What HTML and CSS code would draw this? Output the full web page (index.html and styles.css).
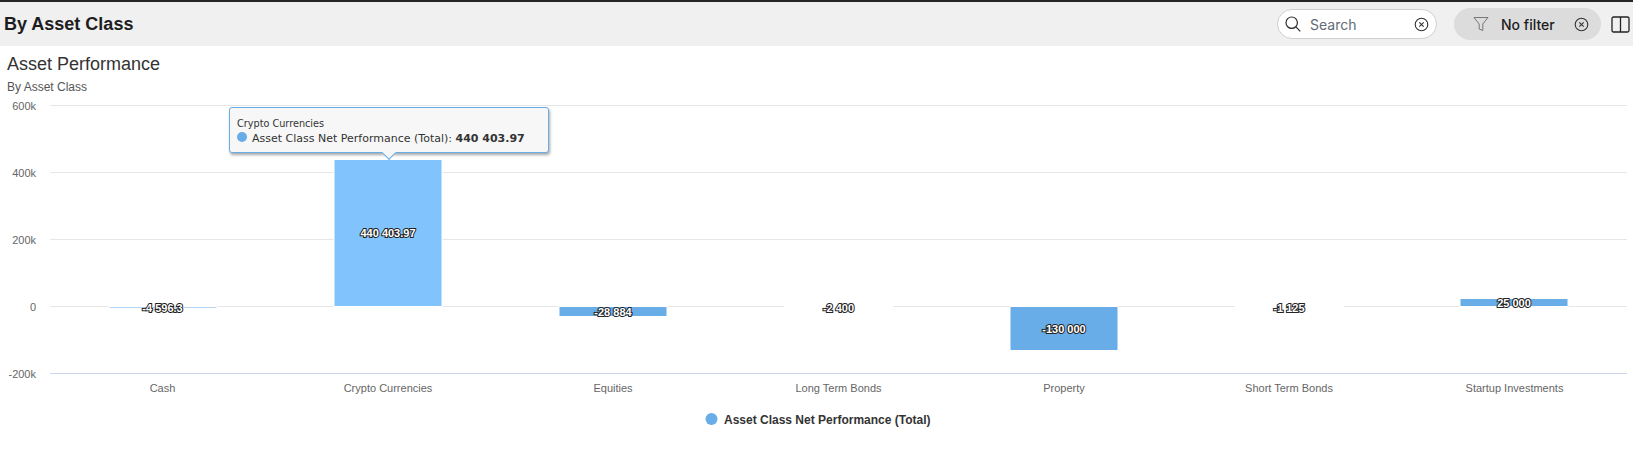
FILE: index.html
```html
<!DOCTYPE html>
<html lang="en">
<head>
<meta charset="utf-8">
<title>By Asset Class</title>
<link rel="stylesheet" href="styles.css">
</head>
<body>
<header class="topbar">
  <h1 class="page-title">By Asset Class</h1>
  <div class="tools">
    <div class="search">
      <svg class="ico-search" width="18" height="18" viewBox="0 0 18 18"><circle cx="7.7" cy="7.7" r="5.7"/><path d="M11.9 11.9 16.3 16.3"/></svg>
      <span class="search-text">Search</span>
      <svg class="ico-clear" width="15" height="15" viewBox="0 0 15 15"><circle cx="7.5" cy="7.5" r="6.3"/><path d="M5.3 5.3 9.7 9.7M9.7 5.3 5.3 9.7"/></svg>
    </div>
    <div class="filter">
      <svg class="ico-funnel" width="16" height="16" viewBox="0 0 16 16"><path d="M1 1.5H15L9.8 8V14.5L6.2 13V8Z"/></svg>
      <span class="filter-text">No filter</span>
      <svg class="ico-clear" width="15" height="15" viewBox="0 0 15 15"><circle cx="7.5" cy="7.5" r="6.3"/><path d="M5.3 5.3 9.7 9.7M9.7 5.3 5.3 9.7"/></svg>
    </div>
    <svg class="ico-panel" width="19" height="17" viewBox="0 0 19 17"><rect x="1" y="1" width="17" height="15" rx="1.5"/><path d="M9.5 1V16"/></svg>
  </div>
</header>
<main class="panel">
  <h2 class="chart-title">Asset Performance</h2>
  <p class="chart-sub">By Asset Class</p>
  <div class="chart">
    <svg class="plot" width="1633" height="359" viewBox="0 98 1633 359">
      <g class="grid">
        <path d="M50 105.5H1627"/>
        <path d="M50 172.5H1627"/>
        <path d="M50 239.5H1627"/>
        <path d="M50 306.5H1627"/>
      </g>
      <path class="axis" d="M50 373.5H1627"/>
      <g class="ylabels">
        <text x="36" y="110">600k</text>
        <text x="36" y="177">400k</text>
        <text x="36" y="244">200k</text>
        <text x="36" y="311">0</text>
        <text x="36" y="378">-200k</text>
      </g>
      <g class="bars">
        <rect x="109" y="306.5" width="108" height="1.5"/>
        <rect class="bar-hover" x="334" y="159.5" width="108" height="147"/>
        <rect x="559" y="306.5" width="108" height="10"/>
        <rect class="bar-flat" x="784.5" y="306.5" width="108" height="1"/>
        <rect x="1010" y="306.5" width="108" height="44"/>
        <rect class="bar-flat" x="1235.5" y="306.5" width="108" height="1"/>
        <rect x="1460" y="298.5" width="108" height="8"/>
      </g>
      <g class="dlabels">
        <text x="162.5" y="312">-4 596.3</text>
        <text x="388" y="237">440 403.97</text>
        <text x="613" y="316">-28 884</text>
        <text x="838.5" y="312">-2 400</text>
        <text x="1064" y="333">-130 000</text>
        <text x="1289" y="312">-1 125</text>
        <text x="1514" y="307">25 000</text>
      </g>
      <g class="xlabels">
        <text x="162.5" y="392">Cash</text>
        <text x="388" y="392">Crypto Currencies</text>
        <text x="613" y="392">Equities</text>
        <text x="838.5" y="392">Long Term Bonds</text>
        <text x="1064" y="392">Property</text>
        <text x="1289" y="392">Short Term Bonds</text>
        <text x="1514.5" y="392">Startup Investments</text>
      </g>
      <circle class="legend-dot" cx="711.5" cy="419" r="6"/>
      <text class="legend-text" x="724" y="424">Asset Class Net Performance (Total)</text>
    </svg>
    <div class="tooltip">
      <div class="tip-head">Crypto Currencies</div>
      <div class="tip-row"><span class="tip-dot"></span>Asset Class Net Performance (Total): <b>440 403.97</b></div>
    </div>
  </div>
</main>
</body>
</html>
```
FILE: styles.css
```css
* { box-sizing: border-box; }
html, body { margin: 0; padding: 0; background: #fff; }
body { width: 1633px; height: 457px; overflow: hidden; font-family: "Liberation Sans", Arial, sans-serif; }

.topbar {
  height: 46px;
  border-top: 2px solid #262626;
  background: #f0f0f0;
  display: flex;
  align-items: center;
  justify-content: space-between;
  padding: 0 3px 0 4px;
}
.page-title { margin: 0; font-size: 18px; font-weight: 700; color: #1d1d1f; }
.tools { display: flex; align-items: center; }

.search {
  width: 160px;
  height: 30px;
  margin-right: 17px;
  padding: 0 7px 0 6px;
  display: flex;
  align-items: center;
  background: #fff;
  border: 1px solid #cfcfcf;
  border-radius: 15px;
}
.search-text { flex: 1; margin-left: 8px; font: 400 14px Inter, sans-serif; color: #5f6b76; }
.ico-search circle, .ico-search path { fill: none; stroke: #2b2b2b; stroke-width: 1.2; }
.ico-clear circle, .ico-clear path { fill: none; stroke: #333; stroke-width: 1.1; }

.filter {
  width: 147px;
  height: 32px;
  margin-right: 10px;
  padding: 0 12px 0 19px;
  display: flex;
  align-items: center;
  background: #dcdcdc;
  border-radius: 16px;
}
.filter-text { flex: 1; margin-left: 12px; font: 500 14px Inter, sans-serif; color: #1d1d1f; }
.ico-funnel path { fill: none; stroke: #777; stroke-width: 1; }
.ico-panel rect, .ico-panel path { fill: none; stroke: #222; stroke-width: 1.3; }

.panel { position: relative; }
.chart-title { margin: 0; padding: 7px 0 0 7px; font-size: 18px; line-height: 22px; font-weight: 400; color: #333; }
.chart-sub { margin: 0; padding: 4px 0 0 7px; font-size: 12px; line-height: 17px; color: #555; }
.chart { position: relative; margin-top: 2px; }
.plot { display: block; font-family: "Liberation Sans", Arial, sans-serif; }

.grid path { stroke: #e6e6e6; stroke-width: 1; fill: none; }
.axis { stroke: #ccd6eb; stroke-width: 1; fill: none; }
.ylabels text { font-size: 11px; fill: #666; text-anchor: end; }
.xlabels text { font-size: 11px; fill: #666; text-anchor: middle; }
.bars rect { fill: #68ace8; stroke: #fff; stroke-width: 1; }
.bars .bar-hover { fill: #81c4fd; }
.bars .bar-flat { fill: #fff; }
.dlabels text {
  font-size: 11px;
  font-weight: 700;
  fill: #fff;
  stroke: #222;
  stroke-width: 2px;
  paint-order: stroke fill;
  text-anchor: middle;
}
.legend-dot { fill: #68ace8; }
.legend-text { font-size: 12px; font-weight: 700; fill: #333; }

.tooltip {
  position: absolute;
  left: 229px;
  top: 9px;
  width: 320px;
  height: 46px;
  padding: 8px 0 0 7px;
  background: #f7f7f7;
  border: 1px solid #68ace8;
  border-radius: 3px;
  box-shadow: 1px 2px 3px rgba(0, 0, 0, .35);
  font-family: "DejaVu Sans", sans-serif;
  color: #333;
}
.tooltip::after {
  content: "";
  position: absolute;
  left: 154px;
  bottom: -6px;
  width: 9px;
  height: 9px;
  background: #f7f7f7;
  border-right: 1px solid #68ace8;
  border-bottom: 1px solid #68ace8;
  transform: rotate(45deg);
}
.tip-head { font-size: 9.7px; line-height: 14px; padding-top: 1px; }
.tip-row { font-size: 11px; line-height: 16px; white-space: nowrap; }
.tip-dot { display: inline-block; width: 10px; height: 10px; margin-right: 5px; border-radius: 50%; background: #68ace8; }
```
